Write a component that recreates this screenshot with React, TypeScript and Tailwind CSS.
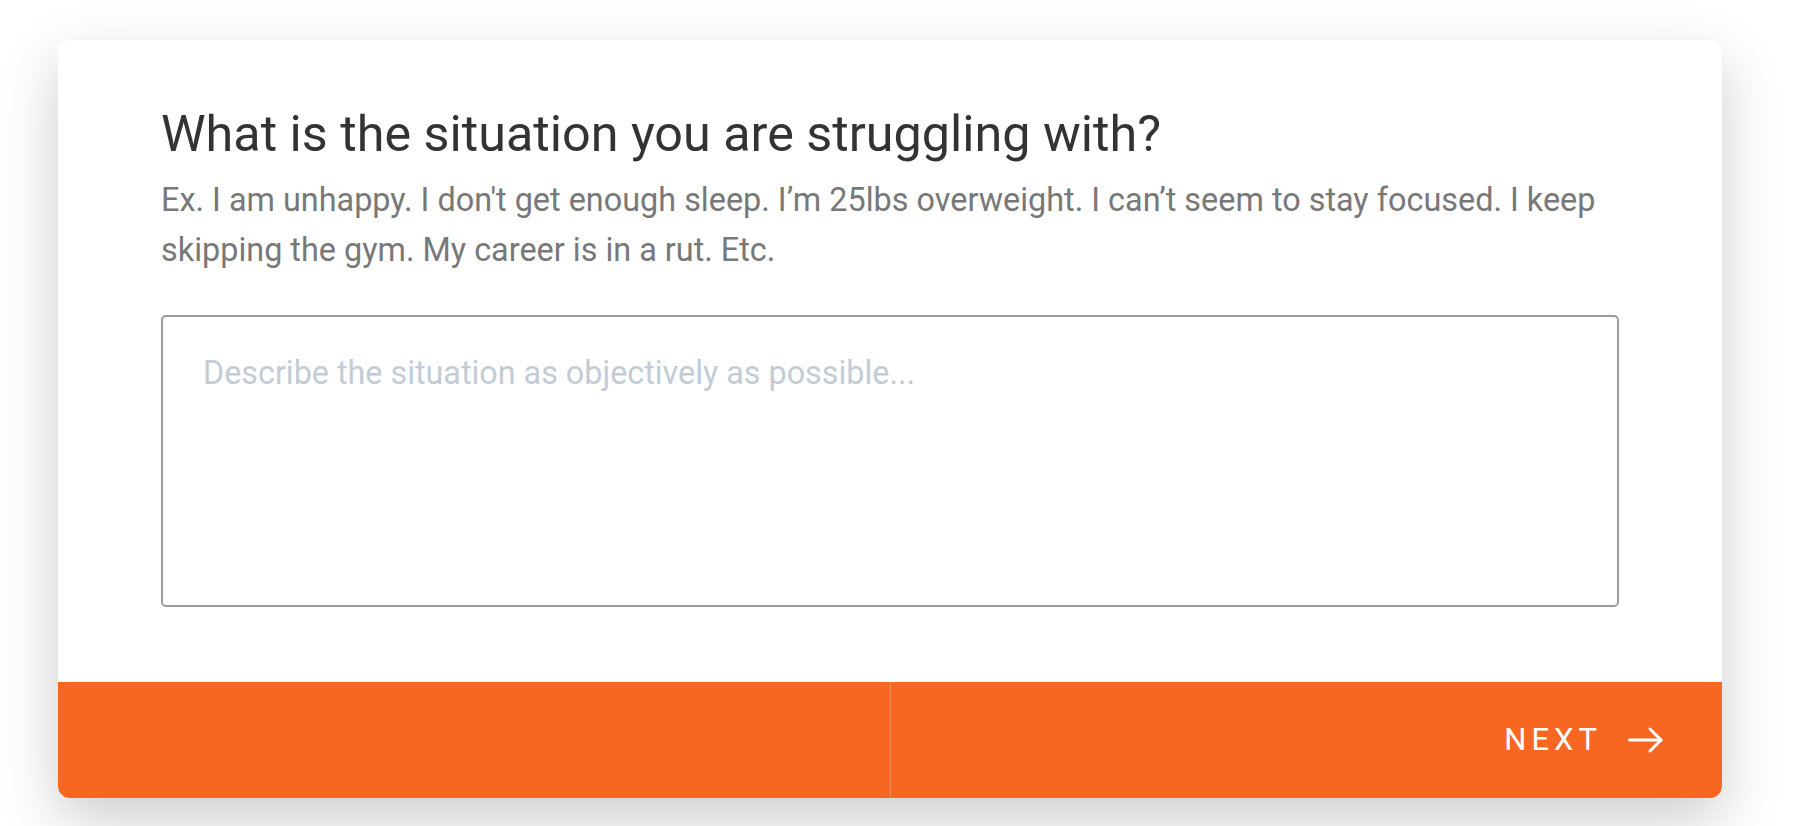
import React from "react";

export default function App() {
  return (
    <div
      className="w-[1810px] h-[826px] bg-white overflow-hidden"
      style={{ fontFamily: "Roboto, 'Noto Sans', sans-serif" }}
    >
      <div className="ml-[58px] mt-[40px] w-[1664px] bg-white rounded-[12px] shadow-[0_22px_60px_rgba(0,0,0,0.2)] overflow-hidden">
        <div className="px-[103px] pt-[66px] pb-[75px] flex flex-col">
          <h1 className="text-[50.3px] leading-[56px] text-[#333333] font-normal">
            What is the situation you are struggling with?
          </h1>
          <p className="mt-[13px] text-[32.4px] leading-[50px] text-[#787878]">
            Ex. I am unhappy. I don't get enough sleep. I’m 25lbs overweight. I can’t seem to stay focused. I keep skipping the gym. My career is in a rut. Etc.
          </p>
          <textarea
            className="mt-[40px] h-[292px] w-full resize-none rounded-[5px] border-2 border-[#9b9b9b] pl-[40px] pr-[40px] pt-[34px] text-[32.3px] leading-[45px] text-[#333] placeholder:text-[#c3ccd6] outline-none"
            style={{ fontFamily: "Roboto, 'Noto Sans', sans-serif" }}
            placeholder="Describe the situation as objectively as possible..."
          />
        </div>
        <div className="grid grid-cols-2 h-[116px] bg-[#f76722]">
          <div />
          <div className="border-l border-[#f98a55] flex items-center justify-end pr-[59px]">
            <span className="text-[31px] tracking-[5px] text-white font-normal">NEXT</span>
            <svg
              className="ml-[26px]"
              width="35"
              height="26"
              viewBox="0 0 35 26"
              fill="none"
              stroke="white"
              strokeWidth="3"
              strokeLinecap="round"
              strokeLinejoin="round"
            >
              <path d="M1.5 13H33" />
              <path d="M22 2L33 13L22 24" />
            </svg>
          </div>
        </div>
      </div>
    </div>
  );
}
